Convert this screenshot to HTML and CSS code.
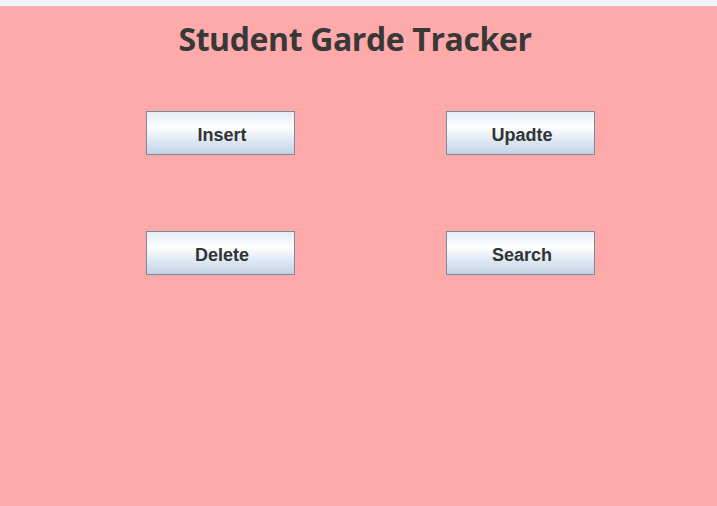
FILE: index.html
```html
<!DOCTYPE html>
<html>
<head>
<meta charset="utf-8">
<link rel="stylesheet" href="styles.css">
</head>
<body>
<div class="topbar"></div>
<main class="panel">
  <h1 class="title">Student Garde Tracker</h1>
  <div class="grid">
    <button class="btn">Insert</button>
    <button class="btn">Upadte</button>
    <button class="btn">Delete</button>
    <button class="btn">Search</button>
  </div>
</main>
</body>
</html>
```
FILE: styles.css
```css
html, body {
  margin: 0;
  padding: 0;
  width: 717px;
  height: 506px;
  overflow: hidden;
}
body {
  display: flex;
  flex-direction: column;
  background: #ffaaaa;
}
.topbar {
  height: 6px;
  background: #eef3f9;
  flex: none;
}
.panel {
  flex: 1;
  background: #ffaaaa;
  display: flex;
  flex-direction: column;
}
.title {
  margin: 0;
  padding-top: 12px;
  padding-right: 7px;
  height: 42px;
  text-align: center;
  font-family: "Open Sans", "Noto Sans", sans-serif;
  font-weight: 700;
  font-size: 32px;
  line-height: 42px;
  color: #383838;
  letter-spacing: -0.4px;
}
.grid {
  margin-top: 51px;
  margin-left: 146px;
  display: grid;
  grid-template-columns: 149px 149px;
  column-gap: 151px;
  row-gap: 76px;
}
.btn {
  width: 149px;
  height: 44px;
  box-sizing: border-box;
  border: 1px solid #7a8a9a;
  border-radius: 0;
  background: linear-gradient(to bottom, #e3ebf5 0%, #ffffff 35%, #dce7f2 70%, #c3d4e6 100%);
  font-family: "Liberation Sans", Arial, sans-serif;
  font-weight: 700;
  font-size: 18px;
  color: #333333;
  padding: 4px 0 0 3px;
}
```
